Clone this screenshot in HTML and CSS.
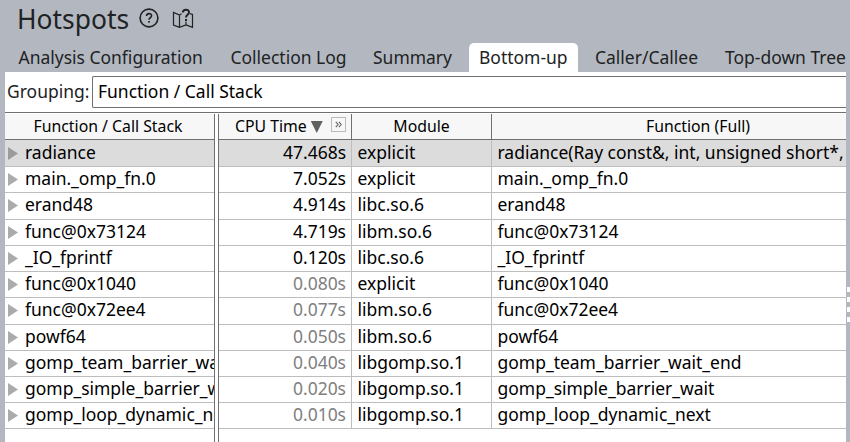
FILE: index.html
```html
<!DOCTYPE html>
<html lang="en">
<head>
<meta charset="utf-8">
<title>Hotspots</title>
<link rel="stylesheet" href="styles.css">
</head>
<body>
<header class="title">
  <h1>Hotspots</h1>
  <svg class="help" viewBox="0 0 20 20"><circle cx="10" cy="10" r="8.9"/><path d="M7.5 8.1C7.5 4.9 12.6 4.8 12.6 7.8C12.6 9.8 10 9.7 10 11.7M10 13.1V14.8"/></svg>
  <svg class="map" viewBox="0 0 22 22"><path d="M9.5 5.8L7.5 7L1.5 4.5V17L7.5 19.4L14 17L20.5 19.4V6.5L18 5.6M7.5 7V19M14 14V17"/><path class="mark" d="M10.8 4.5C11 .8 17 .8 17 4.2C17 6.8 14 6.8 14 9.4M14 11V13.2"/></svg>
</header>
<nav class="tabs">
  <a class="t1">Analysis Configuration</a><a class="t2">Collection Log</a><a class="t3">Summary</a><a class="t4 active">Bottom-up</a><a class="t5">Caller/Callee</a><a class="t6">Top-down Tree</a>
</nav>
<main class="panel">
  <div class="grouping"><label>Grouping:</label><div class="select">Function / Call Stack</div></div>
  <div class="table">
    <section class="pane names">
      <div class="head">Function / Call Stack</div>
      <div class="row selected"><i></i><span>radiance</span></div>
      <div class="row"><i></i><span>main._omp_fn.0</span></div>
      <div class="row"><i></i><span>erand48</span></div>
      <div class="row"><i></i><span>func@0x73124</span></div>
      <div class="row"><i></i><span>_IO_fprintf</span></div>
      <div class="row"><i></i><span>func@0x1040</span></div>
      <div class="row"><i></i><span>func@0x72ee4</span></div>
      <div class="row"><i></i><span>powf64</span></div>
      <div class="row"><i></i><span>gomp_team_barrier_wait_end</span></div>
      <div class="row"><i></i><span>gomp_simple_barrier_wait</span></div>
      <div class="row"><i></i><span>gomp_loop_dynamic_next</span></div>
    </section>
    <section class="pane data">
      <div class="head"><span class="cpu">CPU Time<b class="sort"></b><em><svg viewBox="0 0 9 9"><path d="M1 1L4 4.5L1 8M5 1L8 4.5L5 8"/></svg></em></span><span>Module</span><span class="full">Function (Full)</span></div>
      <div class="row selected"><span class="time">47.468s</span><span>explicit</span><span>radiance(Ray const&amp;, int, unsigned short*,</span></div>
      <div class="row"><span class="time">7.052s</span><span>explicit</span><span>main._omp_fn.0</span></div>
      <div class="row"><span class="time">4.914s</span><span>libc.so.6</span><span>erand48</span></div>
      <div class="row"><span class="time">4.719s</span><span>libm.so.6</span><span>func@0x73124</span></div>
      <div class="row"><span class="time">0.120s</span><span>libc.so.6</span><span>_IO_fprintf</span></div>
      <div class="row"><span class="time dim">0.080s</span><span>explicit</span><span>func@0x1040</span></div>
      <div class="row"><span class="time dim">0.077s</span><span>libm.so.6</span><span>func@0x72ee4</span></div>
      <div class="row"><span class="time dim">0.050s</span><span>libm.so.6</span><span>powf64</span></div>
      <div class="row"><span class="time dim">0.040s</span><span>libgomp.so.1</span><span>gomp_team_barrier_wait_end</span></div>
      <div class="row"><span class="time dim">0.020s</span><span>libgomp.so.1</span><span>gomp_simple_barrier_wait</span></div>
      <div class="row"><span class="time dim">0.010s</span><span>libgomp.so.1</span><span>gomp_loop_dynamic_next</span></div>
    </section>
  </div>
</main>
<div class="grip"><i></i><i></i><i></i><i></i></div>
</body>
</html>
```
FILE: styles.css
```css
* { box-sizing: border-box; }
body { margin: 0; width: 850px; height: 442px; overflow: hidden; background: #b3b8c0; font: 17.48px "Noto Sans", sans-serif; color: #000; }
.title { height: 43px; display: flex; padding-left: 17px; color: #202224; }
h1 { margin: 0; width: 121px; font-size: 26.4px; font-weight: 400; line-height: 38px; white-space: nowrap; }
.title svg { fill: none; stroke: #202224; stroke-width: 1.6; flex: none; }
.help { width: 20px; height: 20px; margin: 8px 0 0 1px; }
.map { width: 22px; height: 22px; margin: 8px 0 0 13px; }
.title .map { stroke-width: 1.2; }
.title .mark { stroke-width: 2; }
.tabs { height: 29px; display: flex; color: #202224; }
.tabs a { flex: none; height: 29px; line-height: 28px; white-space: nowrap; }
.t1 { margin-left: 18.5px; width: 212px; }
.t2 { width: 142.5px; }
.t3 { width: 96px; }
.tabs .active { width: 109px; padding-left: 10px; background: #fff; border-radius: 5px 5px 0 0; }
.t5 { margin-left: 17px; width: 130px; }
.panel { margin-left: 5px; width: 841px; height: 370px; background: #fff; overflow: hidden; }
.grouping { height: 40px; padding: 4px 0 4px 2px; display: flex; color: #202224; }
.grouping label { width: 85px; line-height: 30px; }
.select { flex: 1; height: 32px; line-height: 28px; border: 1px solid #707070; border-right: 0; border-radius: 2px 0 0 2px; padding-left: 5px; color: #000; }
.table { height: 330px; display: flex; border-top: 1px solid #707070; padding-top: 1px; }
.pane { height: 328px; overflow: hidden; }
.names { width: 210px; border-right: 1px solid #707070; }
.data { width: 628px; margin-left: 3px; border-left: 1px solid #707070; }
.head { height: 26px; line-height: 25px; background: #f7f7f7; border-bottom: 1px solid #707070; font-size: 15.8px; text-align: center; white-space: nowrap; }
.names .head { padding-right: 3px; }
.data .head, .data .row { display: grid; grid-template-columns: 133px 140px 1fr; }
.data .head span { border-right: 1px solid #707070; }
.data .head .full { border: 0; padding-left: 58px; }
.data .head .cpu { display: flex; padding-left: 16px; }
.sort { margin: 7px 0 0 4px; width: 12px; height: 12px; background: #606060; clip-path: polygon(0 0, 100% 0, 50% 100%); }
.cpu em { margin: 3px 0 0 8px; width: 15px; height: 15px; border: 1px solid #bbb; display: flex; align-items: center; justify-content: center; }
.cpu em svg { width: 7px; height: 7px; fill: none; stroke: #606060; stroke-width: 1.4; }
.row { height: 26px; line-height: 22px; border-bottom: 1px solid #bdbdbd; white-space: nowrap; }
.row:nth-child(2), .row:nth-child(4), .row:nth-child(8) { height: 27px; }
.row.selected { background: #dcdcdc; line-height: 24px; }
.names .row { display: flex; overflow: hidden; }
.row i { flex: none; width: 10px; height: 13px; margin: 6px 7px 0 3px; background: #ababab; clip-path: polygon(0 0, 100% 50%, 0 100%); }
.selected i { margin-top: 7px; background: #9b9b9b; }
.data .row { grid-template-rows: 100%; }
.data .row span { padding-left: 5.5px; border-right: 1px solid #bdbdbd; overflow: hidden; }
.data .row span:last-child { border: 0; }
.data .row .time { text-align: right; padding-right: 5px; }
.data .row .dim { color: #808080; }
.grip { position: absolute; left: 847px; top: 287px; width: 3px; display: grid; gap: 5px; }
.grip i { height: 5px; background: #fff; }
```
